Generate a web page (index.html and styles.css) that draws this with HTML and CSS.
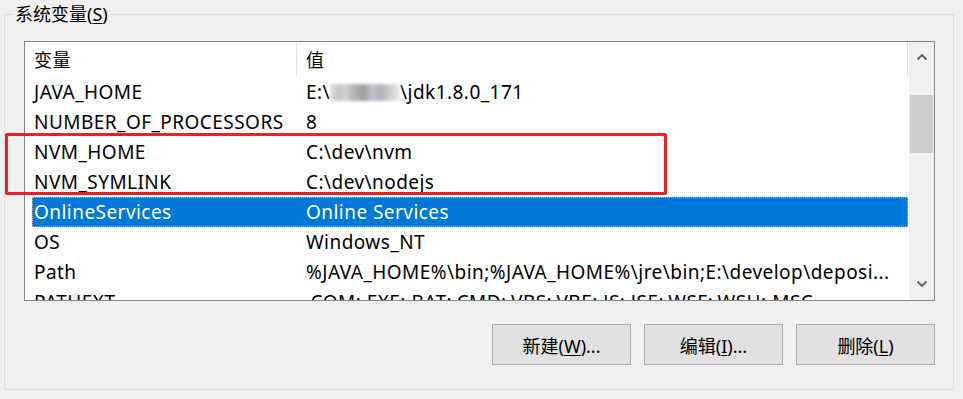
FILE: index.html
```html
<!DOCTYPE html>
<html lang="zh-CN">
<head>
  <meta charset="UTF-8">
  <title>系统变量</title>
  <link rel="stylesheet" href="styles.css">
</head>
<body>
  <fieldset class="group">
    <legend>系统变量(<u>S</u>)</legend>

    <!-- 变量列表 -->
    <div class="list">
      <div class="rows">
        <div class="row head">
          <div class="col name">变量</div>
          <div class="col value">值</div>
        </div>
        <div class="row"><div class="col name">JAVA_HOME</div><div class="col value">E:\<span class="blur"></span>\jdk1.8.0_171</div></div>
        <div class="row"><div class="col name">NUMBER_OF_PROCESSORS</div><div class="col value">8</div></div>
        <div class="row"><div class="col name">NVM_HOME</div><div class="col value">C:\dev\nvm</div></div>
        <div class="row"><div class="col name">NVM_SYMLINK</div><div class="col value">C:\dev\nodejs</div></div>
        <div class="row selected"><div class="col name">OnlineServices</div><div class="col value">Online Services</div></div>
        <div class="row"><div class="col name">OS</div><div class="col value">Windows_NT</div></div>
        <div class="row"><div class="col name">Path</div><div class="col value">%JAVA_HOME%\bin;%JAVA_HOME%\jre\bin;E:\develop\deposi...</div></div>
        <div class="row"><div class="col name">PATHEXT</div><div class="col value">.COM;.EXE;.BAT;.CMD;.VBS;.VBE;.JS;.JSE;.WSF;.WSH;.MSC</div></div>
      </div>
      <div class="scrollbar">
        <svg class="arrow" width="12" height="8" viewBox="0 0 12 8"><polyline points="1.5,6.5 6,2 10.5,6.5" fill="none" stroke="#606060" stroke-width="1.8"/></svg>
        <div class="track"><div class="thumb"></div></div>
        <svg class="arrow" width="12" height="8" viewBox="0 0 12 8"><polyline points="1.5,1.5 6,6 10.5,1.5" fill="none" stroke="#606060" stroke-width="1.8"/></svg>
      </div>
    </div>

    <div class="buttons">
      <button class="btn">新建(<u>W</u>)...</button>
      <button class="btn">编辑(<u>I</u>)...</button>
      <button class="btn">删除(<u>L</u>)</button>
    </div>

    <!-- 红框标注 -->
    <div class="mark"></div>
  </fieldset>
</body>
</html>
```

FILE: styles.css
```css
body {
margin: 0;
padding: 0;
background-color: #f0f0f0;
color: #000;
font-family: "Noto Sans", "Noto Sans CJK SC", sans-serif;
font-size: 18px;
}
u {
text-decoration-thickness: 1px;
text-underline-offset: 2px;
}
.group {
position: relative;
margin: 4px 0 0 4px;
width: 950px;
box-sizing: border-box;
padding: 17px 18px 24px 19px;
border: 1px solid #dcdcdc;
}
.group legend {
margin-left: -11px;
padding: 0 2px;
line-height: 20px;
color: #000;
}

/* lista */
.list {
display: flex;
height: 260px;
box-sizing: border-box;
border: 1px solid #828790;
background-color: #fff;
overflow: hidden;
}
.rows {
flex: 1;
overflow: hidden;
font-size: 19px;
letter-spacing: 0.45px;
}
.row {
display: flex;
height: 30px;
line-height: 30px;
margin-left: 7px;
white-space: nowrap;
}
.row.head {
height: 35px;
line-height: 37px;
margin-left: 0;
padding-left: 7px;
font-size: 18px;
}
.row.head .name {
border-right: 1px solid #e5e5e5;
}
.row.head .value {
border-right: 1px solid #e5e5e5;
flex: 1;
}
.col {
padding-left: 2px;
overflow: hidden;
}
.col.name {
width: 263px;
}
.row.head .col.name {
width: 262px;
}
.col.value {
padding-left: 9px;
}
.row.selected {
background-color: #0078d7;
color: #fff;
outline: 1px dotted #e8a46a;
outline-offset: -1px;
}
.blur {
display: inline-block;
width: 70px;
height: 17px;
vertical-align: -2px;
background: linear-gradient(90deg, #ddd 0, #bbb 12%, #cfc9c0 22%, #a8a8a8 34%, #8f8f8f 48%, #b6bcc4 60%, #a0a4aa 72%, #c8c8c8 86%, #e8e8e8 100%);
filter: blur(1.5px);
opacity: 0.85;
}

/* barra de rolagem */
.scrollbar {
width: 25px;
margin-left: 1px;
display: flex;
flex-direction: column;
align-items: center;
background-color: #f0f0f0;
}
.arrow {
margin: 11px 0 8px;
}
.scrollbar .arrow:last-child {
margin: 8px 0 12px;
}
.track {
flex: 1;
width: 100%;
}
.thumb {
margin: 26px 1px 0;
height: 58px;
background-color: #cdcdcd;
}

/* botoes */
.buttons {
display: flex;
justify-content: flex-end;
gap: 13px;
margin-top: 23px;
}
.btn {
width: 139px;
height: 41px;
font-family: "Noto Sans", "Noto Sans CJK SC", sans-serif;
font-size: 18px;
color: #000;
background-color: #e1e1e1;
border: 1px solid #adadad;
padding: 0;
}

.mark {
position: absolute;
left: 0;
top: 109px;
width: 662px;
height: 62px;
box-sizing: border-box;
border: 3px solid #e8202a;
border-radius: 2px;
}
```
